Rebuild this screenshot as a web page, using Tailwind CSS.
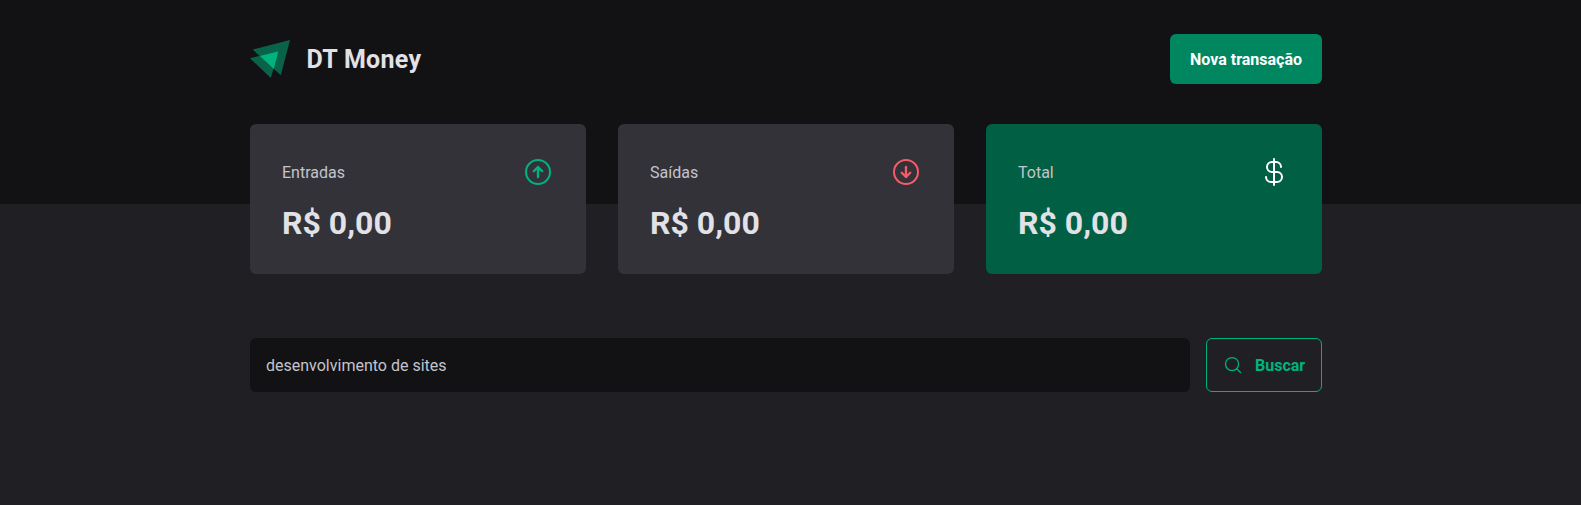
<!DOCTYPE html>
<html lang="pt-BR">
<head>
<meta charset="UTF-8">
<title>DT Money</title>
<script src="https://cdn.jsdelivr.net/npm/@tailwindcss/browser@4"></script>
</head>
<body class="bg-[#202024] font-['Roboto',sans-serif] text-[16px] leading-[normal] text-[#c4c4cc] pr-[9px] overflow-hidden">
<div class="-mr-[9px] h-[204px] bg-[#121214] pr-[9px] pt-[34px]">
  <header class="mx-auto flex h-[50px] w-[1072px] items-center justify-between">
    <div class="flex items-center gap-[16.5px]">
      <svg class="h-[38px] w-10" viewBox="0 0 40 38">
        <path d="M40 0 30.8 35.3 2.7 9.6Z" fill="#00b37e" fill-opacity=".5"/>
        <path d="M0 18.3 28.2 11.4 20.8 38Z" fill="#00b37e" fill-opacity=".5"/>
        <path d="M10.3 15.9 28.2 11.4 23.8 29Z" fill="#00b37e"/>
      </svg>
      <span class="text-[25px] leading-none font-bold tracking-[0.3px] text-[#e1e1e6]">DT Money</span>
    </div>
    <button class="h-[50px] w-[152px] rounded-md bg-[#00875f] font-bold text-white">Nova transação</button>
  </header>
</div>
<section class="mx-auto -mt-20 grid w-[1072px] grid-cols-3 gap-8">
  <div class="h-[150px] rounded-md bg-[#323238] p-8">
    <div class="flex items-center justify-between">
      <span>Entradas</span>
      <svg class="size-8" viewBox="0 0 256 256" fill="none" stroke="#00b37e" stroke-width="16" stroke-linecap="round" stroke-linejoin="round"><circle cx="128" cy="128" r="96"/><path stroke-width="19" d="M94.1 121.9 128 88l33.9 33.9M128 168V88"/></svg>
    </div>
    <strong class="mt-4 block text-[32px] leading-[38px] text-[#e1e1e6]">R$ 0,00</strong>
  </div>
  <div class="h-[150px] rounded-md bg-[#323238] p-8">
    <div class="flex items-center justify-between">
      <span>Saídas</span>
      <svg class="size-8" viewBox="0 0 256 256" fill="none" stroke="#f75a68" stroke-width="16" stroke-linecap="round" stroke-linejoin="round"><circle cx="128" cy="128" r="96"/><path stroke-width="19" d="M94.1 134.1 128 168l33.9-33.9M128 88v80"/></svg>
    </div>
    <strong class="mt-4 block text-[32px] leading-[38px] text-[#e1e1e6]">R$ 0,00</strong>
  </div>
  <div class="h-[150px] rounded-md bg-[#015f43] p-8">
    <div class="flex items-center justify-between">
      <span>Total</span>
      <svg class="size-8" viewBox="0 0 256 256" fill="none" stroke="#fff" stroke-width="16" stroke-linecap="round" stroke-linejoin="round"><path d="M128 24v208M184 88a40 40 0 0 0-40-40h-32a40 40 0 0 0 0 80h40a40 40 0 0 1 0 80h-48a40 40 0 0 1-40-40"/></svg>
    </div>
    <strong class="mt-4 block text-[32px] leading-[38px] text-[#e1e1e6]">R$ 0,00</strong>
  </div>
</section>
<form class="mx-auto mt-16 flex h-[54px] w-[1072px] gap-4">
  <input class="min-w-0 flex-1 rounded-md bg-[#121214] px-4 text-[#c4c4cc] outline-none" value="desenvolvimento de sites">
  <button type="button" class="flex w-[116px] items-center gap-3 rounded-md border border-[#00b37e] px-4 font-bold text-[#00b37e]">
    <svg class="size-5 shrink-0" viewBox="0 0 256 256" fill="none" stroke="#00b37e" stroke-width="16" stroke-linecap="round" stroke-linejoin="round"><circle cx="116" cy="116" r="84"/><path d="M175.4 175.4 224 224"/></svg>
    Buscar
  </button>
</form>
</body>
</html>
